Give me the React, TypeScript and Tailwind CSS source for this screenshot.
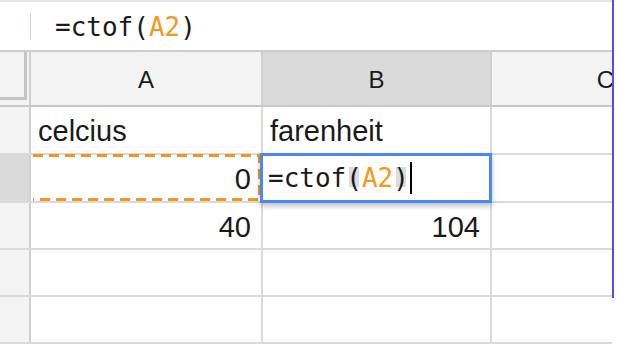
const cols = [
  { key: "A", width: "w-[232px]" },
  { key: "B", width: "w-[229px]" },
  { key: "C", width: "w-[229px]" },
];

const rows = [
  { n: 1, h: "h-[48px]", cells: ["celcius", "farenheit", ""], align: "left" },
  { n: 2, h: "h-[48px]", cells: ["0", "", ""], align: "right" },
  { n: 3, h: "h-[47px]", cells: ["40", "104", ""], align: "right" },
  { n: 4, h: "h-[47px]", cells: ["", "", ""], align: "right" },
  { n: 5, h: "h-[47px]", cells: ["", "", ""], align: "right" },
];

function Paren({ ch }: { ch: string }) {
  return (
    <span className="relative inline-block">
      <span className="absolute left-[3px] right-[3px] top-[2px] bottom-[4px] bg-[#dcdcdc]" />
      <span className="relative">{ch}</span>
    </span>
  );
}

export default function App() {
  const mono = { fontFamily: '"DejaVu Sans Mono", "Liberation Mono", monospace' };
  return (
    <div
      className="relative h-[350px] w-[618px] overflow-hidden bg-white text-[#1a1a1a]"
      style={{ fontFamily: '"Liberation Sans", Arial, sans-serif' }}
    >
      <div className="w-[612px] overflow-hidden">
        {/* formula bar */}
        <div className="flex h-[52px] items-center border-t-2 border-b-2 border-t-[#e3e3e3] border-b-[#cdcdcd]">
          <div className="ml-[30px] h-[26px] w-px bg-[#d8cfc2]" />
          <div className="ml-[24px] pt-[2px] text-[26px] leading-none" style={mono}>
            =ctof(<span className="text-[#f7981d]">A2</span>)
          </div>
        </div>

        {/* column headers */}
        <div className="flex h-[55px] w-max border-b-2 border-[#c8c8c8]">
          <div className="h-full w-[31px] shrink-0 border-r-2 border-[#d0d0d0] bg-[#f3f3f3] pr-[2px] pb-[5px]">
            <div className="h-full border-r-[3px] border-b-[3px] border-[#c4c4c4]" />
          </div>
          {cols.map((c) => (
            <div
              key={c.key}
              className={`flex h-full shrink-0 items-center justify-center border-r-2 border-[#d0d0d0] pt-[2px] text-[24px] ${c.width} ${
                c.key === "B" ? "bg-[#dadada]" : "bg-[#f3f3f3]"
              }`}
            >
              {c.key}
            </div>
          ))}
        </div>

        {/* rows */}
        {rows.map((r) => (
          <div key={r.n} className={`flex w-max ${r.h} border-b-2 border-[#dadada]`}>
            <div
              className={`h-full w-[31px] shrink-0 border-r-2 border-[#d0d0d0] ${
                r.n === 2 ? "bg-[#dadada]" : "bg-[#f3f3f3]"
              }`}
            />
            {cols.map((c, i) => (
              <div
                key={c.key}
                className={`flex h-full shrink-0 items-center border-r-2 border-[#dadada] pt-[4px] text-[29px] ${c.width} ${
                  r.align === "right" ? "justify-end pr-[10px]" : "justify-start pl-[7px]"
                }`}
              >
                {r.cells[i]}
              </div>
            ))}
          </div>
        ))}
      </div>

      {/* page break line */}
      <div className="absolute left-[612px] top-0 h-[298px] w-[1.5px] bg-[#4d4dff]" />

      {/* copy marquee around A2 */}
      <svg className="absolute left-[30px] top-[153px]" width="232" height="50">
        <path
          d="M3 2.5 H229.5 V46.5 H3"
          fill="none"
          stroke="#f7941d"
          strokeWidth="3"
          strokeDasharray="10 6"
        />
      </svg>

      {/* cell editor */}
      <div className="absolute left-[260px] top-[153px] flex h-[50px] w-[232px] items-center border-[3px] border-[#4a89f3] bg-white pl-[5px] shadow-[0_3px_5px_rgba(0,0,0,0.25)]">
        <div className="flex items-center text-[26px] leading-none" style={mono}>
          =ctof<Paren ch="(" />
          <span className="text-[#f7981d]">A2</span>
          <Paren ch=")" />
          <span className="ml-[1px] h-[32px] w-[2px] bg-black" />
        </div>
      </div>
    </div>
  );
}
